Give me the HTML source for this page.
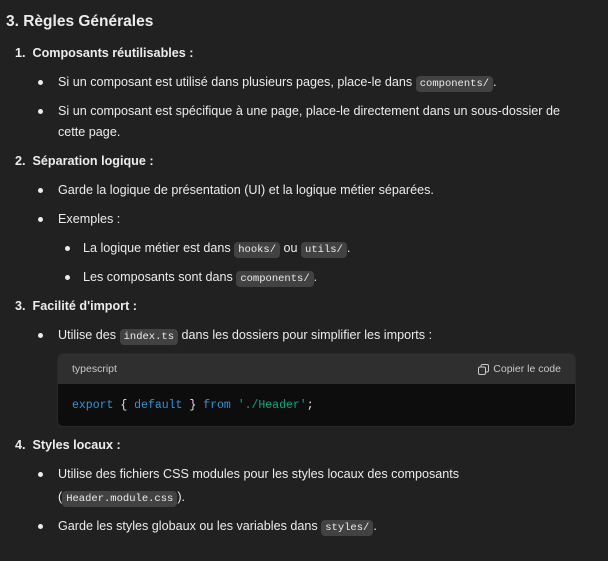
<!DOCTYPE html>
<html><head><meta charset="utf-8"><style>
*{margin:0;padding:0;box-sizing:border-box}
body{width:608px;height:561px;background:#212121;color:#ececec;font-family:"Liberation Sans",sans-serif;font-size:12.6px;position:relative;overflow:hidden}
.l{position:absolute;white-space:nowrap;line-height:20px;height:20px}
.b{font-weight:bold}
.dot{position:absolute;width:5px;height:5px;border-radius:50%;background:#ececec}
code{font-family:"Liberation Mono",monospace;font-size:10.5px;background:#424242;border-radius:4px;padding:2px 4px;color:#ececec}
.cb{position:absolute;left:57px;top:353px;width:519px;height:74px;border-radius:6px;overflow:hidden;background:#0d0d0d;border:1px solid #2a2a2a}
.ch{height:30px;background:#2f2f2f;font-size:10.5px;color:#c8c8c8;padding:0 14px;display:flex;align-items:center;justify-content:space-between}
.cc{font-family:"Liberation Mono",monospace;font-size:11.5px;padding:15px 14px;color:#e6e6e6}
</style></head><body>
<div class="l b" style="left:6px;top:12px;font-size:15.5px">3. Règles Générales</div>

<div class="l b" style="left:15px;top:43px">1.&nbsp; Composants réutilisables :</div>
<div class="dot" style="left:38px;top:80px"></div>
<div class="l" style="left:58px;top:72px">Si un composant est utilisé dans plusieurs pages, place-le dans <code>components/</code>.</div>
<div class="dot" style="left:38px;top:109px"></div>
<div class="l" style="left:58px;top:101px">Si un composant est spécifique à une page, place-le directement dans un sous-dossier de</div>
<div class="l" style="left:58px;top:122px">cette page.</div>

<div class="l b" style="left:15px;top:151px">2.&nbsp; Séparation logique :</div>
<div class="dot" style="left:38px;top:188px"></div>
<div class="l" style="left:58px;top:180px">Garde la logique de présentation (UI) et la logique métier séparées.</div>
<div class="dot" style="left:38px;top:217px"></div>
<div class="l" style="left:58px;top:209px">Exemples :</div>
<div class="dot" style="left:65px;top:246px"></div>
<div class="l" style="left:83px;top:238px">La logique métier est dans <code>hooks/</code> ou <code>utils/</code>.</div>
<div class="dot" style="left:65px;top:275px"></div>
<div class="l" style="left:83px;top:267px">Les composants sont dans <code>components/</code>.</div>

<div class="l b" style="left:15px;top:296px">3.&nbsp; Facilité d'import :</div>
<div class="dot" style="left:38px;top:333px"></div>
<div class="l" style="left:58px;top:325px">Utilise des <code>index.ts</code> dans les dossiers pour simplifier les imports :</div>

<div class="cb">
<div class="ch"><span>typescript</span><span style="display:flex;align-items:center;gap:4px"><svg width="11" height="11" viewBox="0 0 11 11" fill="none" stroke="#c8c8c8" stroke-width="1"><rect x="0.5" y="3" width="7" height="7.5" rx="1.5"/><path d="M3 3V2a1.5 1.5 0 0 1 1.5-1.5h4.5A1.5 1.5 0 0 1 10.5 2v4.5A1.5 1.5 0 0 1 9 8H7.5"/></svg>Copier le code</span></div>
<div class="cc"><span style="color:#2e95d3">export</span> { <span style="color:#2e95d3">default</span> } <span style="color:#2e95d3">from</span> <span style="color:#00a67d">'./Header'</span>;</div>
</div>

<div class="l b" style="left:15px;top:435px">4.&nbsp; Styles locaux :</div>
<div class="dot" style="left:38px;top:472px"></div>
<div class="l" style="left:58px;top:464px">Utilise des fichiers CSS modules pour les styles locaux des composants</div>
<div class="l" style="left:58px;top:487px">(<code>Header.module.css</code>).</div>
<div class="dot" style="left:38px;top:524px"></div>
<div class="l" style="left:58px;top:516px">Garde les styles globaux ou les variables dans <code>styles/</code>.</div>
</body></html>
